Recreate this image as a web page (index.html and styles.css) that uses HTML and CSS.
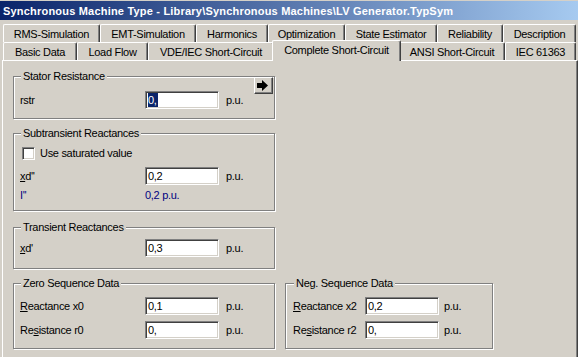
FILE: index.html
```html
<!DOCTYPE html>
<html>
<head>
<meta charset="utf-8">
<link rel="stylesheet" href="styles.css">
</head>
<body>
<div class="window">
  <div class="titlebar"><span>Synchronous Machine Type - Library\Synchronous Machines\LV Generator.TypSym</span></div>
  <div class="tabs">
    <div class="tab-row back">
      <div class="tab t-rms">RMS-Simulation</div>
      <div class="tab t-emt">EMT-Simulation</div>
      <div class="tab t-harm">Harmonics</div>
      <div class="tab t-opt">Optimization</div>
      <div class="tab t-state">State Estimator</div>
      <div class="tab t-rel">Reliability</div>
      <div class="tab t-desc">Description</div>
    </div>
    <div class="tab-row front">
      <div class="tab t-basic">Basic Data</div>
      <div class="tab t-load">Load Flow</div>
      <div class="tab t-vde">VDE/IEC Short-Circuit</div>
      <div class="tab t-comp selected">Complete Short-Circuit</div>
      <div class="tab t-ansi">ANSI Short-Circuit</div>
      <div class="tab t-iec">IEC 61363</div>
    </div>
  </div>
  <div class="panel">
    <div class="group g-stator">
      <div class="group-body">
        <div class="group-title">Stator Resistance</div>
        <div class="row r-stator">
          <span class="lbl">rstr</span>
          <div class="edit"><span class="sel">0,</span></div>
          <span class="unit">p.u.</span>
        </div>
      </div>
      <div class="arrow-btn">
        <svg width="17" height="15" viewBox="0 0 17 15"><path d="M2 5H7V2L13 7.5L7 13V10H2Z" fill="#000"/></svg>
      </div>
    </div>

    <div class="group g-sub">
      <div class="group-body">
        <div class="group-title">Subtransient Reactances</div>
        <div class="row r-check">
          <span class="checkbox"></span>
          <span class="check-lbl">Use saturated value</span>
        </div>
        <div class="row r-xd2">
          <span class="lbl"><u>x</u>d''</span>
          <div class="edit">0,2</div>
          <span class="unit">p.u.</span>
        </div>
        <div class="row r-i2 info">
          <span class="lbl">I''</span>
          <span class="val">0,2 p.u.</span>
        </div>
      </div>
    </div>

    <div class="group g-trans">
      <div class="group-body">
        <div class="group-title">Transient Reactances</div>
        <div class="row r-xd1">
          <span class="lbl"><u>x</u>d'</span>
          <div class="edit">0,3</div>
          <span class="unit">p.u.</span>
        </div>
      </div>
    </div>

    <div class="bottom-groups">
      <div class="group g-zero">
        <div class="group-body">
          <div class="group-title">Zero Sequence Data</div>
          <div class="row r-first">
            <span class="lbl"><u>R</u>eactance x0</span>
            <div class="edit">0,1</div>
            <span class="unit">p.u.</span>
          </div>
          <div class="row r-second">
            <span class="lbl">Re<u>s</u>istance r0</span>
            <div class="edit">0,</div>
            <span class="unit">p.u.</span>
          </div>
        </div>
      </div>
      <div class="group g-neg">
        <div class="group-body">
          <div class="group-title">Neg. Sequence Data</div>
          <div class="row r-first">
            <span class="lbl"><u>R</u>eactance x2</span>
            <div class="edit">0,2</div>
            <span class="unit">p.u.</span>
          </div>
          <div class="row r-second">
            <span class="lbl">Re<u>s</u>istance r2</span>
            <div class="edit">0,</div>
            <span class="unit">p.u.</span>
          </div>
        </div>
      </div>
    </div>
  </div>
</div>
</body>
</html>
```

FILE: styles.css
```css
html, body {
  margin: 0;
  padding: 0;
}
body {
  width: 578px;
  height: 357px;
  overflow: hidden;
  background: #d4d0c8;
  font-family: "Liberation Sans", Arial, sans-serif;
  font-size: 11px;
  letter-spacing: -0.3px;
  color: #000;
}
.window {
  display: flex;
  flex-direction: column;
  height: 357px;
}
.titlebar {
  margin-top: 1px;
  height: 19px;
  background: linear-gradient(to right, #0a246a, #a6caf0);
  color: #fff;
  font-weight: bold;
  font-size: 11px;
  letter-spacing: 0.2px;
  padding-left: 3px;
  display: flex;
  align-items: center;
  white-space: nowrap;
}
.tabs {
  margin-top: 4px;
  padding-left: 3px;
}
.tab-row {
  display: flex;
  height: 18px;
}
.tab {
  box-sizing: border-box;
  height: 18px;
  border-top: 1px solid #fff;
  border-left: 1px solid #fff;
  border-right: 1px solid #404040;
  box-shadow: inset -1px 0 0 #808080;
  border-radius: 2px 2px 0 0;
  background: #d4d0c8;
  display: flex;
  align-items: center;
  justify-content: center;
  padding-top: 1px;
  white-space: nowrap;
}
.t-rms { width: 97px; }
.t-emt { width: 96px; }
.t-harm { width: 72px; }
.t-opt { width: 77px; }
.t-state { width: 92px; }
.t-rel { width: 66px; }
.t-desc { width: 73px; }
.t-basic { width: 74px; }
.t-load { width: 71px; }
.t-vde { width: 126px; }
.t-comp { width: 125px; }
.t-ansi { width: 106px; }
.t-iec { width: 71px; }
.tab.selected {
  position: relative;
  z-index: 2;
  width: 129px;
  height: 21px;
  margin: -2px -2px 0 -2px;
  padding-top: 0;
  padding-bottom: 2px;
}
.panel {
  flex: 1;
  margin-left: 2px;
  border-top: 1px solid #fff;
  border-left: 1px solid #fff;
  border-right: 1px solid #404040;
  box-shadow: inset -1px 0 0 #808080;
  padding: 15px 0 0 10px;
  display: flex;
  flex-direction: column;
  align-items: flex-start;
}
.group {
  box-sizing: border-box;
  width: 262px;
  border: 1px solid #808080;
  box-shadow: inset 1px 1px 0 #fff, 1px 1px 0 #fff;
  display: flex;
  align-items: flex-start;
  padding-left: 6px;
}
.group-body {
  flex: 1;
  display: flex;
  flex-direction: column;
}
.group-title {
  width: fit-content;
  margin-top: -7px;
  margin-left: 1px;
  padding: 0 2px;
  height: 13px;
  line-height: 13px;
  background: #d4d0c8;
  white-space: nowrap;
}
.row {
  display: flex;
  align-items: center;
  height: 18px;
  white-space: nowrap;
}
.lbl {
  width: 125px;
  flex: none;
}
.edit {
  box-sizing: border-box;
  width: 74px;
  height: 18px;
  flex: none;
  background: #fff;
  border-top: 1px solid #808080;
  border-left: 1px solid #808080;
  border-bottom: 1px solid #fff;
  border-right: 1px solid #fff;
  box-shadow: inset 1px 1px 0 #404040, inset -1px -1px 0 #d4d0c8;
  padding-left: 2px;
  display: flex;
  align-items: center;
}
.sel {
  background: #0a246a;
  color: #fff;
  padding: 0 1px 0 0;
  line-height: 14px;
}
.unit {
  margin-left: 7px;
}
.arrow-btn {
  box-sizing: border-box;
  width: 19px;
  height: 17px;
  margin-right: 1px;
  flex: none;
  border-top: 1px solid #fff;
  border-left: 1px solid #fff;
  border-right: 1px solid #404040;
  border-bottom: 1px solid #404040;
  box-shadow: inset -1px -1px 0 #808080;
  display: flex;
}
.arrow-btn svg {
  display: block;
}
.checkbox {
  box-sizing: border-box;
  width: 13px;
  height: 13px;
  margin-left: 2px;
  background: #fff;
  border-top: 1px solid #808080;
  border-left: 1px solid #808080;
  border-bottom: 1px solid #fff;
  border-right: 1px solid #fff;
  box-shadow: inset 1px 1px 0 #404040, inset -1px -1px 0 #d4d0c8;
}
.check-lbl {
  margin-left: 5px;
}
.info {
  color: #000080;
}

/* vertical rhythm per group */
.g-stator { padding-bottom: 9px; }
.r-stator { margin-top: 8px; }

.g-sub { margin-top: 14px; padding-bottom: 6px; }
.r-check { margin-top: 4px; }
.r-xd2 { margin-top: 5px; }
.r-i2 { margin-top: 1px; }

.g-trans { margin-top: 16px; padding-bottom: 11px; }
.r-xd1 { margin-top: 5px; }

.bottom-groups {
  display: flex;
  margin-top: 14px;
}
.g-zero, .g-neg { padding-bottom: 9px; }
.r-first { margin-top: 7px; }
.r-second { margin-top: 6px; }
.g-neg {
  width: 208px;
  margin-left: 10px;
  padding-left: 7px;
}
.g-neg .lbl { width: 72px; }
.g-neg .unit { margin-left: 5px; }
```
